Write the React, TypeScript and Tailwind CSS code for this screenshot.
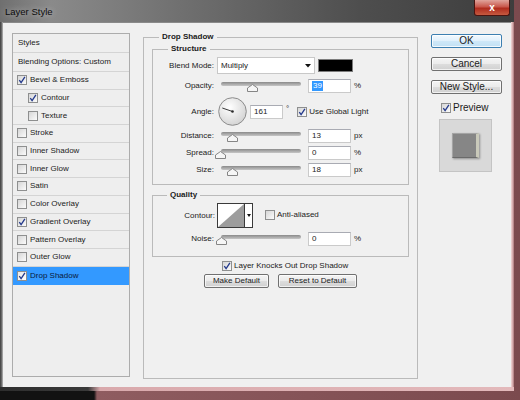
import React from 'react';

const listRows = [
  { label: 'Bevel & Emboss', on: true },
  { label: 'Contour', on: true, sub: true },
  { label: 'Texture', sub: true },
  { label: 'Stroke' },
  { label: 'Inner Shadow' },
  { label: 'Inner Glow' },
  { label: 'Satin' },
  { label: 'Color Overlay' },
  { label: 'Gradient Overlay', on: true },
  { label: 'Pattern Overlay' },
  { label: 'Outer Glow' },
];

function Check({ on, className = '' }: { on?: boolean; className?: string }) {
  return (
    <span
      className={`flex h-[10px] w-[10px] shrink-0 items-center justify-center border border-[#8e8f8f] bg-[linear-gradient(135deg,#d6d6d6,#fbfbfb)] ${className}`}
    >
      {on && (
        <svg width="8" height="8" viewBox="0 0 8 8">
          <path d="M1.3 4.1 L3.1 6.7 L6.9 0.8" fill="none" stroke="#23398c" strokeWidth="1.3" />
        </svg>
      )}
    </span>
  );
}

function Caret() {
  return (
    <svg width="6" height="4" viewBox="0 0 6 4">
      <polygon points="0,0 6,0 3,3.5" fill="#111" />
    </svg>
  );
}

function Slider({ pos }: { pos: number }) {
  return (
    <div className="ml-[7px] flex h-[14px] w-[80px] flex-col">
      <div className="mt-[3px] h-[4px] w-full rounded-full bg-[linear-gradient(#8a8a8a,#c6c6c6)]" />
      <svg className="-mt-[2px]" style={{ marginLeft: pos }} width="11" height="8" viewBox="0 0 11 8">
        <polygon points="5.5,0.5 10.5,4 10.5,7.5 0.5,7.5 0.5,4" fill="#f6f6f6" stroke="#858585" />
      </svg>
    </div>
  );
}

function Field({ children, className = '' }: { children: React.ReactNode; className?: string }) {
  return (
    <div className={`flex h-[14px] items-center border border-[#cacaca] border-t-[#a9abb3] bg-white pl-[3px] ${className}`}>
      {children}
    </div>
  );
}

function SliderRow({ label, pos, value, unit, className = '' }: { label: string; pos: number; value: React.ReactNode; unit: string; className?: string }) {
  return (
    <div className={`flex h-[14px] items-center ${className}`}>
      <span className="w-[61px] text-right">{label}</span>
      <Slider pos={pos} />
      <Field className="ml-[7px] w-[43px]">{value}</Field>
      <span className="ml-[3px]">{unit}</span>
    </div>
  );
}

function Btn({ children, className = '' }: { children: React.ReactNode; className?: string }) {
  return (
    <div
      className={`flex items-center justify-center rounded-[2px] border border-[#707070] bg-[linear-gradient(#f4f4f4,#ebebeb_50%,#dddddd_50%,#d0d0d0)] shadow-[inset_0_0_0_1px_rgba(255,255,255,0.7)] ${className}`}
    >
      {children}
    </div>
  );
}

export default function App() {
  return (
    <div className="h-[400px] w-[520px] overflow-hidden bg-[linear-gradient(90deg,#121212_0px,#121212_94px,#8f5c60_97px,#7b4a4e_100%)] font-['Liberation_Sans',Arial,sans-serif] text-[#1b1b1b]">
      <div className="flex h-[392px] w-[514px] flex-col">
        {/* title bar */}
        <div className="flex h-[22px] items-start justify-between bg-[linear-gradient(90deg,#6f6f6f,#8a8a8a_10%,#707070_35%,#4e4e4e_70%,#3d3d3d)]">
          <span className="ml-[5px] mt-[6px] text-[9.5px] leading-[11px] text-[#0c0c0c] [text-shadow:0_0_6px_rgba(255,255,255,0.6)]">
            Layer Style
          </span>
          <div className="mr-[4px] flex h-[16px] w-[36px] items-center justify-center rounded-b-[3px] border border-t-0 border-[#4a1410] bg-[linear-gradient(#e0a49c,#c9584c_45%,#b02c1e_55%,#c55a40)] text-[10px] font-bold leading-[10px] text-white">
            x
          </div>
        </div>
        <div className="flex h-[365px]">
          <div className="w-[3px] bg-[linear-gradient(90deg,#3c3c3c,#6a6a6a,#b9b9b9)]" />
          {/* client */}
          <div className="flex flex-1 items-start border-t border-[#8a8a8a] bg-[#f0f0f0] pl-[9px] pt-[9px] text-[8px] leading-[10px]">
            {/* styles list */}
            <div className="mt-[1px] flex h-[344px] w-[118px] flex-col border border-[#acacac] bg-[#eeeeee]">
              <div className="flex h-[19px] shrink-0 items-center border-b border-[#d4d4d4] pl-[5px]">Styles</div>
              <div className="flex h-[19px] shrink-0 items-center border-b border-[#d4d4d4] pl-[5px]">Blending Options: Custom</div>
              {listRows.map((r) => (
                <div
                  key={r.label}
                  className={`flex h-[17.7px] shrink-0 items-center border-b border-[#d4d4d4] ${r.sub ? 'pl-[15px]' : 'pl-[4px]'}`}
                >
                  <Check on={r.on} />
                  <span className="ml-[3px]">{r.label}</span>
                </div>
              ))}
              <div className="flex h-[18px] shrink-0 items-center bg-[#3399ff] pl-[4px] text-[#0a1a3a]">
                <Check on className="bg-[linear-gradient(135deg,#e8e8e8,#ffffff)]" />
                <span className="ml-[3px]">Drop Shadow</span>
              </div>
            </div>

            {/* main panel */}
            <fieldset className="ml-[13px] h-[347px] w-[275px] shrink-0 border border-[#bababa]">
              <legend className="ml-[15px] px-[3px] font-bold leading-[10px]">Drop Shadow</legend>

              <fieldset className="ml-[8px] mt-[2px] w-[257px] border border-[#bababa] pb-[7px]">
                <legend className="ml-[15px] px-[3px] font-bold leading-[10px]">Structure</legend>

                <div className="mt-[3px] flex h-[17px] items-center">
                  <span className="w-[61px] text-right">Blend Mode:</span>
                  <div className="ml-[3px] flex h-[17px] w-[98px] items-center justify-between border border-[#c8c8c8] bg-white pl-[3px] pr-[3px]">
                    <span>Multiply</span>
                    <Caret />
                  </div>
                  <div className="ml-[3px] h-[13px] w-[35px] border border-[#7c7c7c] bg-black" />
                </div>

                <SliderRow
                  className="mt-[5px]"
                  label="Opacity:"
                  pos={26}
                  value={<span className="bg-[#3399ff] px-[1px] text-white">39</span>}
                  unit="%"
                />

                <div className="mt-[4px] flex h-[29px] items-center">
                  <span className="w-[61px] text-right">Angle:</span>
                  <svg className="ml-[4px]" width="29" height="29" viewBox="0 0 29 29">
                    <defs>
                      <radialGradient id="dial" cx="40%" cy="35%" r="70%">
                        <stop offset="0%" stopColor="#ffffff" />
                        <stop offset="100%" stopColor="#d2d2d2" />
                      </radialGradient>
                    </defs>
                    <circle cx="14.5" cy="14.5" r="13.8" fill="url(#dial)" stroke="#8c8c8c" />
                    <line x1="14.5" y1="14.5" x2="4.3" y2="11" stroke="#3a3a3a" strokeWidth="1" />
                    <circle cx="14.5" cy="14.5" r="1.3" fill="#2a2a2a" />
                  </svg>
                  <Field className="ml-[3px] w-[33px]">161</Field>
                  <span className="ml-[3px] self-start pt-[7px]">°</span>
                  <Check on className="ml-[8px]" />
                  <span className="ml-[2px]">Use Global Light</span>
                </div>

                <SliderRow className="mt-[3px]" label="Distance:" pos={6} value="13" unit="px" />
                <SliderRow className="mt-[3px]" label="Spread:" pos={-6} value="0" unit="%" />
                <SliderRow className="mt-[3px]" label="Size:" pos={6} value="18" unit="px" />
              </fieldset>

              <fieldset className="ml-[8px] mt-[5px] w-[257px] border border-[#bababa] pb-[10px]">
                <legend className="ml-[14px] px-[3px] font-bold leading-[10px]">Quality</legend>

                <div className="mt-[3px] flex h-[25px] items-center">
                  <span className="w-[62px] text-right">Contour:</span>
                  <div className="ml-[2px] flex h-[25px]">
                    <div className="h-[25px] w-[28px] border border-[#3a3a3a] bg-white">
                      <svg width="26" height="23" viewBox="0 0 26 23">
                        <polygon points="0,23 26,0 26,23" fill="#9d9d9d" />
                      </svg>
                    </div>
                    <div className="flex h-[25px] w-[8px] items-center justify-center border border-l-0 border-[#3a3a3a] bg-white">
                      <svg width="4" height="3" viewBox="0 0 4 3">
                        <polygon points="0,0 4,0 2,3" fill="#111" />
                      </svg>
                    </div>
                  </div>
                  <Check className="ml-[12px] -mt-[2px]" />
                  <span className="ml-[2px] -mt-[2px]">Anti-aliased</span>
                </div>

                <SliderRow className="mt-[4px]" label="Noise:" pos={-5} value="0" unit="%" />
              </fieldset>

              <div className="ml-[78px] mt-[4px] flex h-[10px] items-center">
                <Check on />
                <span className="ml-[2px]">Layer Knocks Out Drop Shadow</span>
              </div>

              <div className="ml-[60px] mt-[3px] flex gap-[9px]">
                <Btn className="h-[14px] w-[65px]">Make Default</Btn>
                <Btn className="h-[14px] w-[79px]">Reset to Default</Btn>
              </div>
            </fieldset>

            {/* right column */}
            <div className="ml-[13px] mt-[2px] flex w-[71px] flex-col text-[10px] leading-[12px]">
              <div className="flex h-[14px] items-center justify-center rounded-[2px] border border-[#3c7fb1] bg-[linear-gradient(#f2f9fe,#e0f0fb_50%,#cfe8f8_50%,#c2e0f4)] shadow-[inset_0_0_0_1px_rgba(255,255,255,0.8)]">
                OK
              </div>
              <Btn className="mt-[9px] h-[14px]">Cancel</Btn>
              <Btn className="mt-[9px] h-[14px]">New Style...</Btn>
              <div className="ml-[10px] mt-[8px] flex h-[12px] items-center">
                <Check on />
                <span className="ml-[2px]">Preview</span>
              </div>
              <div className="ml-[8px] mt-[5px] flex h-[53px] w-[53px] items-center justify-center border border-[#c4c4c4] bg-[#d9d9d9]">
                <div className="h-[25px] w-[27px] border-l border-t border-b border-[#a4a4a4] border-b-[#6a6a6a] border-r-[3px] border-r-[#c9c9ba] bg-[#868686] shadow-[1px_1px_2px_rgba(0,0,0,0.35)]" />
              </div>
            </div>
          </div>
          <div className="w-[3px] bg-[linear-gradient(90deg,#f2dada,#d7aeb0,#a87478)]" />
        </div>
        <div className="h-[4px] bg-[linear-gradient(90deg,#2e2e2e,#3a3a3a_88px,#d9a9ac_100px,#e3b9bb)]" />
      </div>
    </div>
  );
}
